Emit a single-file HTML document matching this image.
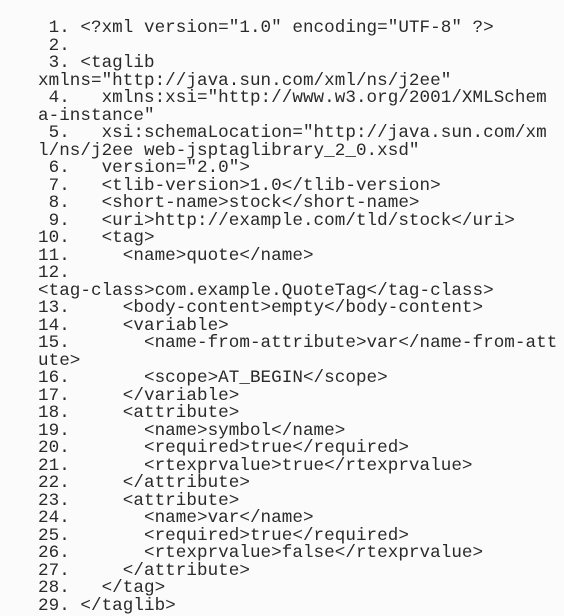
<!DOCTYPE html>
<html><head><meta charset="utf-8"><style>
html,body{margin:0;padding:0;width:564px;height:616px;background:#fbfbfb;overflow:hidden}
pre{position:absolute;left:38px;top:20px;margin:0;font-family:"Liberation Mono",monospace;font-size:17.6px;line-height:17.5px;color:#2a2a2a;letter-spacing:0.04px}
</style></head><body>
<pre> 1. &lt;?xml version="1.0" encoding="UTF-8" ?&gt;
 2.
 3. &lt;taglib
xmlns="http://java.sun.com/xml/ns/j2ee"
 4.   xmlns:xsi="http://www.w3.org/2001/XMLSchem
a-instance"
 5.   xsi:schemaLocation="http://java.sun.com/xm
l/ns/j2ee web-jsptaglibrary_2_0.xsd"
 6.   version="2.0"&gt;
 7.   &lt;tlib-version&gt;1.0&lt;/tlib-version&gt;
 8.   &lt;short-name&gt;stock&lt;/short-name&gt;
 9.   &lt;uri&gt;http://example.com/tld/stock&lt;/uri&gt;
10.   &lt;tag&gt;
11.     &lt;name&gt;quote&lt;/name&gt;
12.
&lt;tag-class&gt;com.example.QuoteTag&lt;/tag-class&gt;
13.     &lt;body-content&gt;empty&lt;/body-content&gt;
14.     &lt;variable&gt;
15.       &lt;name-from-attribute&gt;var&lt;/name-from-att
ute&gt;
16.       &lt;scope&gt;AT_BEGIN&lt;/scope&gt;
17.     &lt;/variable&gt;
18.     &lt;attribute&gt;
19.       &lt;name&gt;symbol&lt;/name&gt;
20.       &lt;required&gt;true&lt;/required&gt;
21.       &lt;rtexprvalue&gt;true&lt;/rtexprvalue&gt;
22.     &lt;/attribute&gt;
23.     &lt;attribute&gt;
24.       &lt;name&gt;var&lt;/name&gt;
25.       &lt;required&gt;true&lt;/required&gt;
26.       &lt;rtexprvalue&gt;false&lt;/rtexprvalue&gt;
27.     &lt;/attribute&gt;
28.   &lt;/tag&gt;
29. &lt;/taglib&gt;</pre>
</body></html>
